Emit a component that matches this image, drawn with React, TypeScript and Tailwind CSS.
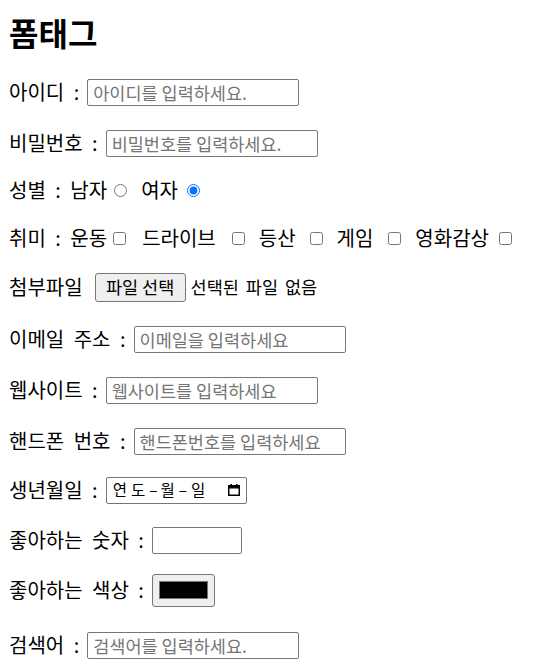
import React from 'react';

const field =
  'h-[27px] rounded-[2px] border border-[#767676] bg-white px-[5px] text-[17.5px] text-black outline-none [word-spacing:0px] placeholder:text-[#757575]';

function CalendarIcon() {
  return (
    <svg width="12" height="12" viewBox="0 0 12 12" aria-hidden="true">
      <rect x="0.75" y="1.75" width="10.5" height="9.5" fill="none" stroke="#000" strokeWidth="1.5" />
      <rect x="0.5" y="1.5" width="11" height="3" fill="#000" />
      <rect x="2.5" y="0" width="1.5" height="2" fill="#000" />
      <rect x="8" y="0" width="1.5" height="2" fill="#000" />
    </svg>
  );
}

export default function App() {
  return (
    <div className="min-h-[670px] bg-white pl-[9px] font-['Noto_Sans_CJK_KR',sans-serif] text-[20px] leading-none text-black [word-spacing:5px]">
      <h1 className="flex h-16 items-center text-[32px] font-bold">폼태그</h1>

      <form className="flex flex-col">
        <div className="mt-[14px] flex h-7 items-center">
          <span>아이디 :</span>
          <input className={`ml-[8px] w-[212px] ${field}`} placeholder="아이디를 입력하세요." />
        </div>

        <div className="mt-[23px] flex h-7 items-center">
          <span>비밀번호 :</span>
          <input type="password" className={`ml-[8px] w-[212px] ${field}`} placeholder="비밀번호를 입력하세요." />
        </div>

        <div className="mt-[19px] flex h-7 items-center">
          <span>성별 : 남자</span>
          <input type="radio" name="gender" className="m-0 ml-[7px] h-[13px] w-[13px]" />
          <span className="ml-[14px]">여자</span>
          <input type="radio" name="gender" defaultChecked className="m-0 ml-[9px] h-[13px] w-[13px]" />
        </div>

        <div className="mt-[20px] flex h-7 items-center">
          <span>취미 : 운동</span>
          <input type="checkbox" className="m-0 ml-[6px] h-[13px] w-[13px]" />
          <span className="ml-[16px]">드라이브</span>
          <input type="checkbox" className="m-0 ml-[16px] h-[13px] w-[13px]" />
          <span className="ml-[14px]">등산</span>
          <input type="checkbox" className="m-0 ml-[14px] h-[13px] w-[13px]" />
          <span className="ml-[14px]">게임</span>
          <input type="checkbox" className="m-0 ml-[15px] h-[13px] w-[13px]" />
          <span className="ml-[14px]">영화감상</span>
          <input type="checkbox" className="m-0 ml-[10px] h-[13px] w-[13px]" />
        </div>

        <div className="mt-[21px] flex h-7 items-center">
          <span>첨부파일</span>
          <button
            type="button"
            className="ml-[12px] h-[29px] w-[91px] rounded-[3px] border border-[#767676] bg-[#efefef] text-[17.5px] [word-spacing:0px]"
          >
            파일 선택
          </button>
          <span className="ml-[5px] text-[17.5px] [word-spacing:3px]">선택된 파일 없음</span>
        </div>

        <div className="mt-[24px] flex h-7 items-center">
          <span>이메일 주소 :</span>
          <input type="email" className={`ml-[8px] w-[212px] ${field}`} placeholder="이메일을 입력하세요" />
        </div>

        <div className="mt-[23px] flex h-7 items-center">
          <span>웹사이트 :</span>
          <input type="url" className={`ml-[8px] w-[212px] ${field}`} placeholder="웹사이트를 입력하세요" />
        </div>

        <div className="mt-[23px] flex h-7 items-center">
          <span>핸드폰 번호 :</span>
          <input type="tel" className={`ml-[8px] w-[212px] ${field}`} placeholder="핸드폰번호를 입력하세요" />
        </div>

        <div className="mt-[21px] flex h-7 items-center">
          <span>생년월일 :</span>
          <div className="ml-[8px] flex h-[27px] w-[141px] items-center rounded-[2px] border border-[#767676] text-[15.5px] [word-spacing:0px]">
            <span className="ml-[6px]">연</span>
            <span className="ml-[4px]">도</span>
            <span className="ml-[4px]">–</span>
            <span className="ml-[3px]">월</span>
            <span className="ml-[4px]">–</span>
            <span className="ml-[4px]">일</span>
            <span className="ml-auto mr-[6px] flex">
              <CalendarIcon />
            </span>
          </div>
        </div>

        <div className="mt-[22px] flex h-7 items-center">
          <span>좋아하는 숫자 :</span>
          <input type="text" className={`ml-[8px] w-[90px] ${field}`} />
        </div>

        <div className="mt-[22px] flex h-7 items-center">
          <span>좋아하는 색상 :</span>
          <div className="ml-[8px] flex h-[33px] w-[63px] items-center justify-center rounded-[3px] border border-[#767676] bg-[#efefef]">
            <div className="h-[18px] w-[49px] border border-[#777] bg-black" />
          </div>
        </div>

        <div className="mt-[27px] flex h-7 items-center">
          <span>검색어 :</span>
          <input type="search" className={`ml-[8px] w-[212px] ${field}`} placeholder="검색어를 입력하세요." />
        </div>
      </form>
    </div>
  );
}
